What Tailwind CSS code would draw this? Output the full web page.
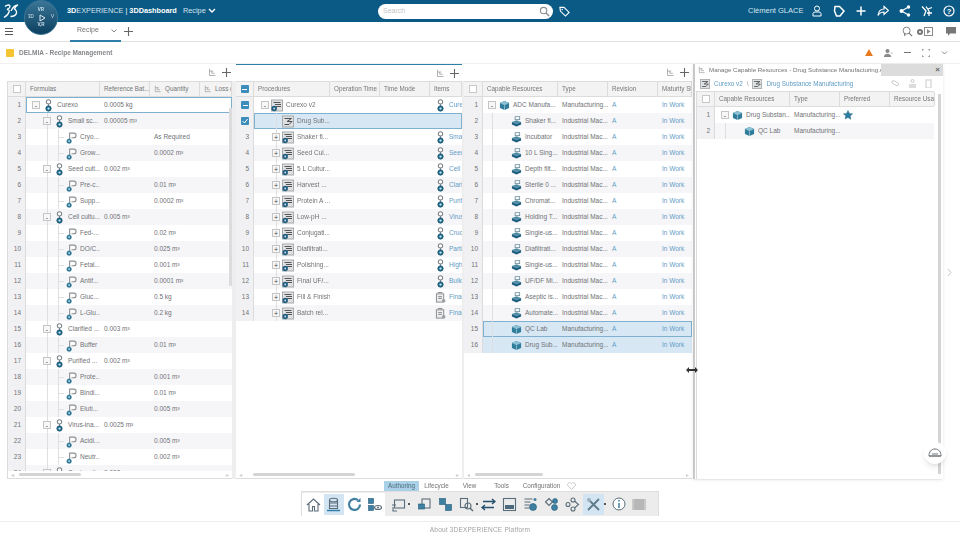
<!DOCTYPE html>
<html lang="en">
  <head>
    <meta charset="UTF-8" />
    <title>3DDashboard</title>
    <script src="https://cdn.jsdelivr.net/npm/@tailwindcss/browser@4"></script>
  </head>
  <body class="bg-white">
    <svg width="0" height="0" class="absolute">
      <defs>
        <symbol id="formula" viewBox="0 0 12 14">
          <circle cx="6" cy="3" r="2.4" fill="#fff" stroke="#7d8488" stroke-width="1.1" />
          <path d="M6 5.4V8" stroke="#7d8488" stroke-width="1.2" />
          <circle cx="6" cy="10.3" r="2.9" fill="#1f6e8f" stroke="#14506c" stroke-width=".8" />
          <circle cx="6" cy="10.3" r="1.2" fill="#cfe3ec" />
        </symbol>
        <symbol id="ingredient" viewBox="0 0 12 14">
          <path d="M4 9V2.2h4.5a2.4 2.4 0 0 1 0 5H6" fill="#fff" stroke="#8a9094" stroke-width="1.2" />
          <circle cx="3.4" cy="11" r="2.4" fill="#2b7f9c" stroke="#17607c" stroke-width=".6" />
          <circle cx="3.4" cy="11" r=".9" fill="#d6e8ef" />
        </symbol>
        <symbol id="proc" viewBox="0 0 12 12">
          <rect x=".5" y=".5" width="11" height="11" fill="#dfe0e1" stroke="#a7a9ab" />
          <path d="M2.5 3h7M4 5h6M5 7h5" stroke="#555" stroke-width="1" fill="none" />
          <circle cx="3.2" cy="9" r="2.7" fill="#1d5c83" />
          <circle cx="3.2" cy="9" r=".9" fill="#dfe0e1" />
        </symbol>
        <symbol id="procplain" viewBox="0 0 12 12">
          <rect x=".5" y=".5" width="11" height="11" fill="#dfe0e1" stroke="#a7a9ab" />
          <path d="M2.5 3h7L5 6h5L7 9H2.5" stroke="#4b4f52" stroke-width="1" fill="none" />
        </symbol>
        <symbol id="package" viewBox="0 0 12 14">
          <rect x="1.5" y="3" width="8" height="9" fill="#eee" stroke="#80868a" />
          <path d="M3 1.500h5M3.500 6h4M3.500 8h4" stroke="#80868a" fill="none" />
          <circle cx="9.500" cy="10.500" r="2" fill="#9ba1a5" />
        </symbol>
        <symbol id="cube" viewBox="0 0 12 12">
          <path d="M6 1l5 2.400v5.200L6 11 1 8.600V3.400z" fill="#2f7d9b" />
          <path d="M6 1l5 2.400L6 5.800 1 3.400z" fill="#8cc0d3" />
          <path d="M6 5.800V11" stroke="#b9d8e3" stroke-width=".7" />
        </symbol>
        <symbol id="machine" viewBox="0 0 12 12">
          <rect x="4.500" y=".8" width="5" height="3.200" fill="#fff" stroke="#5d7f90" stroke-width=".8" />
          <path d="M1 6.500l5-2 5 2-5 2.200z" fill="#4d8ba6" />
          <path d="M1 6.500v2.800L6 11.500l5-2.200V6.500L6 8.700z" fill="#1e5f80" />
        </symbol>
        <symbol id="star" viewBox="0 0 12 12">
          <path d="M6 .6l1.700 3.500 3.800.5-2.800 2.700.7 3.900L6 9l-3.400 1.700.7-3.900L.5 4.600l3.800-.5z" fill="#2d7ea3" stroke="#1d5c7d" stroke-width=".5" />
        </symbol>
        <symbol id="levels" viewBox="0 0 12 12">
          <path d="M2 1v9h8M2 4h5M5 4v3h4" stroke="#9a9a9a" fill="none" />
        </symbol>
      </defs>
    </svg>

    <div class="relative w-[960px] h-[540px] overflow-hidden flex flex-col blur-[0.3px] font-['Liberation_Sans',Arial,sans-serif] text-[#707275]">
      <!-- Top bar -->
      <header class="h-[22px] shrink-0 bg-[#0a5a85] flex items-center text-white">
        <span class="w-[67px]"></span>
        <span class="text-[7.300px] w-[115px] whitespace-nowrap"><b class="font-bold">3D</b><span class="text-[#d5e5ee]">EXPERIENCE</span> | <b class="font-bold">3DDashboard</b></span>
        <span class="text-[7.300px] text-[#d5e5ee] ml-[1px] w-[24px]">Recipe</span>
        <svg class="w-[8px] h-[6px] ml-[1px]" viewBox="0 0 8 6"><path d="M1 1l3 3 3-3" stroke="#fff" stroke-width="1.400" fill="none" /></svg>
        <div class="ml-[162px] w-[175px] h-[15px] bg-white rounded-full flex items-center justify-between pl-[5px] pr-[3px]">
          <span class="text-[7px] text-[#c4c6c8]">Search</span>
          <svg class="w-[11px] h-[11px]" viewBox="0 0 12 12"><circle cx="5" cy="5" r="3.500" fill="none" stroke="#8b8d8f" stroke-width="1.200" /><path d="M7.600 7.600L11 11" stroke="#8b8d8f" stroke-width="1.600" /></svg>
        </div>
        <svg class="w-[11px] h-[11px] ml-[6px]" viewBox="0 0 12 12"><path d="M1 1.500h4.500l5.500 5.500-4 4-5.500-5.500z" fill="none" stroke="#fff" stroke-width="1.200" /><circle cx="3.500" cy="3.800" r=".8" fill="#fff" /></svg>
        <span class="ml-[178px] w-[55px] text-[7.500px] text-[#d5e5ee] whitespace-nowrap">Clément GLACE</span>
        <div class="ml-[8px] flex gap-[10px]">
          <svg class="w-[12px] h-[12px]" viewBox="0 0 12 12"><circle cx="6" cy="3.500" r="2.500" fill="none" stroke="#fff" /><path d="M2 11V8.500a2 2 0 0 1 2-1.500h4a2 2 0 0 1 2 1.500V11z" fill="none" stroke="#fff" /></svg>
          <svg class="w-[12px] h-[12px]" viewBox="0 0 12 12"><path d="M2 1.500h4.500L11 6l-4 5H3.500L1.500 6z" fill="none" stroke="#fff" stroke-width="1.500" /></svg>
          <svg class="w-[12px] h-[12px]" viewBox="0 0 12 12"><path d="M6 1.500v9M1.500 6h9" stroke="#fff" stroke-width="1.500" /></svg>
          <svg class="w-[12px] h-[12px]" viewBox="0 0 12 12"><path d="M7 1.500L11.500 5.500 7 9.500V7C4 7 2.500 8 1 10.500 1.500 6.500 3.500 4 7 4z" fill="none" stroke="#fff" stroke-width="1.200" /></svg>
          <svg class="w-[12px] h-[12px]" viewBox="0 0 12 12"><path d="M2.500 6L9.500 2M2.500 6l7 4" stroke="#fff" stroke-width="1.200" /><circle cx="2.500" cy="6" r="2" fill="#fff" /><circle cx="9.500" cy="2" r="1.700" fill="#fff" /><circle cx="9.500" cy="10" r="1.700" fill="#fff" /></svg>
          <svg class="w-[12px] h-[12px]" viewBox="0 0 12 12"><path d="M1 1.500L5 6 3 11M5 1.500L8 6M11 2.500L7 4M6 8h5M8 6v5" stroke="#fff" stroke-width="1.300" fill="none" /></svg>
          <svg class="w-[12px] h-[12px]" viewBox="0 0 12 12"><circle cx="6" cy="6" r="5" fill="none" stroke="#fff" stroke-width="1.200" /><text x="6" y="8.800" text-anchor="middle" font-size="7.500" font-weight="bold" fill="#fff">?</text></svg>
        </div>
      </header>

      <!-- Tabs row -->
      <div class="h-[20px] shrink-0 border-b border-[#e2e2e2] flex items-center relative">
        <div class="w-[18px] flex flex-col gap-[2px] ml-[5px]">
          <span class="h-[1px] w-[8px] bg-[#555]"></span><span class="h-[1px] w-[8px] bg-[#555]"></span><span class="h-[1px] w-[8px] bg-[#555]"></span>
        </div>
        <div class="ml-[47px] w-[51px] h-[20px] border-b-2 border-[#2e7ea8] flex items-center pl-[7px] text-[7px]">
          Recipe
          <svg class="w-[6px] h-[4px] ml-[12px]" viewBox="0 0 6 4"><path d="M.5.500l2.500 2.500L5.500.500" stroke="#888" fill="none" /></svg>
        </div>
        <svg class="w-[9px] h-[9px] ml-[3px]" viewBox="0 0 9 9"><path d="M4.500 0v9M0 4.500h9" stroke="#666" stroke-width="1.100" /></svg>
        <div class="ml-auto mr-[4px] flex items-center">
          <svg class="w-[11px] h-[11px]" viewBox="0 0 12 12"><circle cx="5" cy="5" r="3.800" fill="none" stroke="#777" /><path d="M7.800 7.800L11 11M3 8v3" stroke="#777" stroke-width="1.300" /></svg>
          <span class="ml-[4px] w-[6px] h-[6px] rounded-full border-2 border-[#777]"></span>
          <svg class="w-[9px] h-[9px] ml-[1px] mr-[13px]" viewBox="0 0 9 9"><rect x=".5" y=".5" width="8" height="8" fill="none" stroke="#888" /><path d="M3 2l3.500 2.500L3 7z" fill="#888" /></svg>
          <svg class="w-[10px] h-[9px]" viewBox="0 0 10 9"><path d="M0 0h10v6.500H4L2 9V6.500H0z" fill="#777" /></svg>
        </div>
      </div>

      <!-- Widget title -->
      <div class="h-[22px] shrink-0 flex items-center pl-[6px] border-b border-[#f0f0f0]">
        <span class="w-[8px] h-[8px] bg-[#f5c431] rounded-[1px]"></span>
        <span class="ml-[5px] text-[6.500px] font-bold text-[#85878a]">DELMIA - Recipe Management</span>
        <div class="ml-auto flex items-center gap-[11px] pr-[12px]">
          <svg class="w-[8px] h-[7px]" viewBox="0 0 9 8"><path d="M4.500 0L9 8H0z" fill="#e8791f" /></svg>
          <svg class="w-[9px] h-[8px]" viewBox="0 0 9 8"><circle cx="3.500" cy="2" r="2" fill="#888" /><path d="M0 8c0-4 7-4 7 0zM6.500 4h2.500" fill="#888" stroke="#888" stroke-width=".5" /></svg>
          <span class="w-[7px] h-[1px] bg-[#777]"></span>
          <svg class="w-[8px] h-[8px]" viewBox="0 0 8 8"><path d="M0 2V0h2M6 0h2v2M8 6v2H6M2 8H0V6" fill="none" stroke="#777" /></svg>
          <svg class="w-[7px] h-[4px]" viewBox="0 0 6 4"><path d="M.5.500l2.500 2.500L5.500.500" stroke="#888" fill="none" /></svg>
        </div>
      </div>

      <!-- Three docked grids -->
      <main id="panels" class="h-[415px] shrink-0 flex pl-[7px]"></main>

      <!-- Action bar -->
      <div class="flex flex-col items-center h-[35px] mt-[2px] shrink-0">
        <div class="h-[10px] flex items-center text-[6.300px] w-[358px] pl-[83px]">
          <span class="w-[35px] h-[10px] leading-[10px] bg-[#a9d1e7] text-center text-[#4f6a7a]">Authoring</span>
          <span class="w-[35px] text-center">Lifecycle</span>
          <span class="w-[31px] text-center">View</span>
          <span class="w-[33px] text-center">Tools</span>
          <span class="w-[47px] text-center">Configuration</span>
          <svg class="w-[9px] h-[8px] ml-[2px]" viewBox="0 0 9 8"><path d="M4.500 7.500L.8 3.500A2 2 0 0 1 4.500 1.800 2 2 0 0 1 8.200 3.500z" fill="none" stroke="#c9c9c9" /></svg>
        </div>
        <div id="toolbar" class="w-[358px] h-[25px] bg-[#ececec] flex items-end border-t border-x border-[#dedede]"></div>
      </div>

      <div class="h-[6px] shrink-0 border-b border-[#ededed]"></div>
      <div class="text-center text-[6.500px] text-[#a0a2a5] mt-[3px] tracking-[.2px]">About 3DEXPERIENCE Platform</div>

      <!-- Compass over the top bar -->
      <div class="absolute left-[24px] top-[0px] w-[34px] h-[35px] rounded-full bg-linear-to-b from-[#3a7697] to-[#0c4060] border border-[#3c7594] flex flex-col items-center justify-center text-[4.500px] text-[#cfe2ec]">
        <span class="font-bold">VR</span>
        <span class="flex items-center gap-[5px]">3D
          <svg class="w-[7px] h-[8px]" viewBox="0 0 7 8"><path d="M1 1l5 3-5 3z" fill="none" stroke="#dfeaf0" /></svg>
          V</span>
        <span class="font-bold">V,R</span>
      </div>
      <!-- DS logo -->
      <svg class="absolute left-[3px] top-[3px] w-[16px] h-[16px]" viewBox="0 0 16 16">
        <path d="M2 3.500c2.500-2 5-2 5 0 0 1.500-2 2.500-3 3 2 0 2.500 1 2 2.500-.5 2-2.500 4-5 5.500" fill="none" stroke="#fff" stroke-width="1.300" />
        <path d="M8 8c2-4 5-6 7-6-2 1-3 2.500-3.500 4 1.500 1 2.500 2 2 4-.5 2-3 3.500-6 3.500" fill="none" stroke="#fff" stroke-width="1.300" />
      </svg>

      <!-- Manage Capable Resources window -->
      <section id="floating" class="absolute left-[693px] top-[64px] w-[250px] h-[415px] bg-white border-l-2 border-[#c8c8c8] shadow-sm"></section>

      <!-- Side handle, assistant button and resize cursor -->
      <div class="absolute left-[945px] top-[264px] w-[9px] h-[16px] flex items-center justify-center">
        <svg class="w-[5px] h-[9px]" viewBox="0 0 5 9"><path d="M1 1l3 3.500L1 8" fill="none" stroke="#c4c4c4" /></svg>
      </div>
      <div class="absolute left-[924px] top-[442px] w-[22px] h-[22px] rounded-full bg-white shadow-md flex items-center justify-center">
        <svg class="w-[14px] h-[10px]" viewBox="0 0 14 10"><path d="M1 8c0-4 2-7 6-7s6 3 6 7zM4 6h6M1 8h12" fill="none" stroke="#6d7478" /></svg>
      </div>
      <svg class="absolute left-[686px] top-[367px] w-[12px] h-[6px]" viewBox="0 0 12 6"><path d="M0 3l3-3v2h6V0l3 3-3 3V4H3v2z" fill="#333" /></svg>
    </div>

    <script>
      const use = (id, cls) => `<svg class="${cls}"><use href="#${id}" /></svg>`;
      const exp = (sign) => `<span class="relative z-10 w-[8px] h-[8px] shrink-0 bg-[#f7f7f7] border border-[#c5c5c5] flex items-center justify-center text-[7px] leading-none text-[#444]">${sign}</span>`;
      const gl = "absolute top-0 bottom-0 w-px bg-[#dfdfdf]";
      const checkbox = (on) => on === "tick"
        ? `<span class="w-[8px] h-[8px] bg-[#3c8dbc] rounded-[1px] flex items-center justify-center"><svg class="w-[6px] h-[6px]" viewBox="0 0 6 6"><path d="M.5 3l2 2L5.500 1" stroke="#fff" fill="none" /></svg></span>`
        : on === "dash"
        ? `<span class="w-[8px] h-[8px] bg-[#3c8dbc] rounded-[1px] flex items-center justify-center"><span class="w-[5px] h-px bg-white"></span></span>`
        : `<span class="w-[8px] h-[8px] bg-white border border-[#c8c8c8]"></span>`;

      // one grid header + rows
      function grid(cfg) {
        const head = cfg.cols.map((c) =>
          `<div class="${c.w} shrink-0 h-full border-r border-[#dcdcdc] pl-[4px] flex items-center gap-[3px] overflow-hidden whitespace-nowrap">${c.lv ? use("levels", "w-[8px] h-[8px] shrink-0") : ""}${c.t}</div>`
        ).join("");
        const rows = cfg.rows.map((r, i) => {
          const n = i + 1;
          const sel = r.sel;
          let bg = n % 2 ? "bg-white" : "bg-[#f6f6f9]";
          if (sel) bg = "bg-[#d7e8f4]";
          const ring = r.focus ? "outline outline-1 -outline-offset-1 outline-[#7fb0d0]" : "";
          const tree = `<div class="${cfg.cols[0].w} shrink-0 h-full relative flex items-center ${r.pl} overflow-hidden">
              ${(r.lines || []).map((l) => `<span class="${gl} ${l}"></span>`).join("")}
              ${r.stub ? `<span class="absolute top-1/2 h-px w-[6px] bg-[#dfdfdf] ${r.stub}"></span>` : ""}
              ${r.e ? exp(r.e) : ""}
              <span class="relative z-10 ${r.e ? "ml-[2px]" : ""} w-[12px] h-[14px] shrink-0 flex items-center justify-center">${use(r.i, r.big ? "w-[12px] h-[13px]" : "w-[11px] h-[13px]")}</span>
              <span class="ml-[3px] whitespace-nowrap">${r.t}</span>
            </div>`;
          const cells = cfg.cols.slice(1).map((c, k) => {
            const v = (r.c || [])[k];
            const blue = cfg.blue && cfg.blue.includes(k);
            return `<div class="${c.w} shrink-0 h-full pl-[4px] flex items-center gap-[3px] whitespace-nowrap overflow-hidden ${blue ? "text-[#5f9cc5]" : ""}">${v || ""}</div>`;
          }).join("");
          return `<div class="flex h-[16px] shrink-0">
              <div class="${cfg.numW} shrink-0 h-full bg-[#f1f1f3] border-r border-[#dcdcdc] flex items-center justify-end pr-[4px] text-[6.500px]">${r.check ? checkbox(r.check) : n}</div>
              <div class="flex flex-1 min-w-0 h-full ${bg} ${ring}">${tree}${cells}</div>
            </div>`;
        }).join("");
        return `<div class="h-[16px] shrink-0 flex bg-[#f3f3f3] border-y border-[#dcdcdc] text-[#75777a]">
            <div class="${cfg.numW} shrink-0 h-full border-r border-[#dcdcdc] flex items-center justify-center">${checkbox(cfg.headCheck)}</div>${head}
          </div>
          <div class="flex-1 min-h-0 overflow-hidden flex flex-col text-[6.500px]">${rows}</div>`;
      }

      const hscroll = (thumb) => `<div class="h-[7px] shrink-0 flex items-center px-[3px] gap-[3px] bg-white">
          <span class="text-[#cfcfcf] text-[6px] leading-none">◂</span>
          <span class="flex-1 h-[3px] relative"><span class="absolute top-0 bottom-0 bg-[#d4d4d4] rounded-full ${thumb}"></span></span>
          <span class="text-[#cfcfcf] text-[6px] leading-none">▸</span>
        </div>`;
      const tools = (cls) => `<div class="h-[17px] flex items-center justify-end gap-[5px] ${cls}">${use("levels", "w-[9px] h-[9px]")}<svg class="w-[9px] h-[9px]" viewBox="0 0 9 9"><path d="M4.500 0v9M0 4.500h9" stroke="#666" stroke-width="1.100" /></svg></div>`;

      // left grid
      const L = { pl0: "pl-[6px]", pl1: "pl-[17px]", pl2: "pl-[39px]", v: "left-[21px]", s: "left-[32px]" };
      const f1 = (t, ref) => ({ t, e: "-", i: "formula", pl: L.pl1, lines: [L.v], c: [ref] });
      const f2 = (t, q) => ({ t, i: "ingredient", pl: L.pl2, lines: [L.v, L.s], stub: L.s, c: ["", q] });
      const formulas = [
        { t: "Curexo", e: "-", i: "formula", pl: L.pl0, c: ["0.0005 kg"], focus: true },
        f1("Small sc...", "0.00005 m³"), f2("Cryo...", "As Required"), f2("Grow...", "0.0002 m³"),
        f1("Seed cult...", "0.002 m³"), f2("Pre-c...", "0.01 m³"), f2("Supp...", "0.0002 m³"),
        f1("Cell cultu...", "0.005 m³"), f2("Fed-...", "0.02 m³"), f2("DO/C...", "0.025 m³"),
        f2("Fetal...", "0.001 m³"), f2("Antif...", "0.0001 m³"), f2("Gluc...", "0.5 kg"), f2("L-Glu...", "0.2 kg"),
        f1("Clarified ...", "0.003 m³"), f2("Buffer", "0.01 m³"),
        f1("Purified ...", "0.002 m³"), f2("Prote...", "0.001 m³"), f2("Bindi...", "0.01 m³"), f2("Eluti...", "0.005 m³"),
        f1("Virus-ina...", "0.0025 m³"), f2("Acidi...", "0.005 m³"), f2("Neutr...", "0.002 m³"),
        f1("Conjugati...", "0.002 m³"),
      ];

      // middle grid
      const p1 = (t, item, pk) => ({
        t, e: "+", i: "proc", big: true, pl: "pl-[18px]", lines: ["left-[22px]"],
        c: ["", "", `${use(pk ? "package" : "formula", "w-[11px] h-[13px] shrink-0 ml-[1px]")}<span>${item}</span>`],
      });
      const procedures = [
        { t: "Curexo v2", e: "-", i: "proc", big: true, pl: "pl-[7px]", check: "dash", c: ["", "", `${use("formula", "w-[11px] h-[13px] shrink-0 ml-[1px]")}<span>Cure</span>`] },
        { t: "Drug Sub...", i: "procplain", big: true, pl: "pl-[28px]", lines: ["left-[22px]"], check: "tick", sel: true, focus: true },
        p1("Shaker fl...", "Small"), p1("Seed Cul...", "Seed"), p1("5 L Cultur...", "Cell c"), p1("Harvest ...", "Clarif"),
        p1("Protein A ...", "Purifi"), p1("Low-pH ...", "Virus"), p1("Conjugati...", "Crud"), p1("Diafiltrati...", "Partia"),
        p1("Polishing...", "Highl"), p1("Final UF/...", "Bulk"), p1("Fill &amp; Finish", "Final", true), p1("Batch rel...", "Final", true),
      ];

      // right grid
      const r1 = (t, type, i, extra) => ({ t, i, pl: "pl-[27px]", lines: ["left-[9px]"], c: [type, "A", "In Work"], ...extra });
      const IM = "Industrial Mac...", MF = "Manufacturing...";
      const resources = [
        { t: "ADC Manufa...", e: "-", i: "cube", pl: "pl-[5px]", c: [MF, "A", "In Work"] },
        ...["Shaker fl...", "Incubator", "10 L Sing...", "Depth filt...", "Sterile 0 ...", "Chromat...", "Holding T...", "Single-us...", "Diafiltrati...", "Single-us...", "UF/DF Mi...", "Aseptic is...", "Automate..."].map((t) => r1(t, IM, "machine")),
        r1("QC Lab", MF, "cube", { sel: true, focus: true }),
        r1("Drug Sub...", MF, "cube", { sel: true }),
      ];

      document.getElementById("panels").innerHTML = `
        <div class="w-[225px] shrink-0 flex flex-col text-[6.300px]">
          ${tools("pr-[1px]")}
          <div class="flex-1 min-h-0 relative border-l border-b border-[#dcdcdc] flex flex-col">
            ${grid({ numW: "w-[18px]", cols: [{ w: "w-[74px]", t: "Formulas" }, { w: "w-[50px]", t: "Reference Bat..." }, { w: "w-[50px]", t: "Quantity", lv: true }, { w: "w-[32px]", t: "Loss q", lv: true }], rows: formulas })}
            <span class="absolute right-0 top-[27px] w-[3px] h-[178px] bg-[#dcdcdc]"></span>
            ${hscroll("left-[2px] w-[62px]")}
          </div>
        </div>
        <div class="w-[4px] shrink-0 bg-[#eeeeee] mt-[17px]"></div>
        <div class="w-[226px] shrink-0 flex flex-col text-[6.300px]">
          <div class="border-t border-[#2e7ea8]">${tools("pr-[3px]")}</div>
          <div class="flex-1 min-h-0 border-b border-[#dcdcdc] flex flex-col -mt-px">
            ${grid({ numW: "w-[18px]", headCheck: "dash", blue: [2], cols: [{ w: "w-[76px]", t: "Procedures" }, { w: "w-[50px]", t: "Operation Time" }, { w: "w-[50px]", t: "Time Mode" }, { w: "w-[32px]", t: "Items" }], rows: procedures })}
            ${hscroll("left-[8px] w-[102px]")}
          </div>
        </div>
        <div class="w-[2px] shrink-0 bg-[#eeeeee] mt-[17px]"></div>
        <div class="w-[228px] shrink-0 flex flex-col text-[6.300px]">
          ${tools("pr-[3px]")}
          <div class="flex-1 min-h-0 border-b border-[#dcdcdc] flex flex-col">
            ${grid({ numW: "w-[19px]", blue: [1, 2], cols: [{ w: "w-[75px]", t: "Capable Resources" }, { w: "w-[50px]", t: "Type" }, { w: "w-[50px]", t: "Revision" }, { w: "w-[34px]", t: "Maturity St" }], rows: resources })}
            ${hscroll("left-[2px] w-[68px]")}
          </div>
        </div>`;

      document.getElementById("floating").innerHTML = `
        <div class="h-[12px] flex text-[6.200px]">
          <div class="w-[186px] pl-[3px] flex items-center gap-[3px] whitespace-nowrap overflow-hidden">${use("levels", "w-[8px] h-[8px] shrink-0")}Manage Capable Resources - Drug Substance Manufacturing A</div>
          <div class="flex-1 bg-[#dcdcdc] flex items-center justify-end pr-[3px] text-[8px] font-bold text-[#666]">×</div>
        </div>
        <div class="h-[15px] flex items-center pl-[5px] text-[6.300px] text-[#5f9cc5] gap-[3px]">
          ${use("procplain", "w-[10px] h-[10px]")}<span class="ml-[1px]">Curexo v2</span><span class="text-[#999] mx-[1px]">\\</span>${use("procplain", "w-[10px] h-[10px]")}<span class="ml-[1px]">Drug Substance Manufacturing</span>
          <div class="ml-auto flex items-center gap-[8px] pr-[11px] text-[#c9c9c9]">
            <svg class="w-[9px] h-[7px]" viewBox="0 0 9 7"><path d="M1 1h3l4 3-2 2-5-3z" fill="none" stroke="#c9c9c9" /></svg>
            <svg class="w-[9px] h-[10px]" viewBox="0 0 9 10"><circle cx="4.500" cy="2" r="1.500" fill="none" stroke="#c9c9c9" /><path d="M1 9V5h7v4z" fill="#dddddd" /></svg>
            <svg class="w-[7px] h-[9px]" viewBox="0 0 7 9"><path d="M0 1h7M1 2v7h5V2" fill="none" stroke="#c9c9c9" /></svg>
          </div>
        </div>
        <div class="relative ml-[1px] mr-[9px] h-[388px] flex flex-col text-[6.300px] border-l border-[#dcdcdc]">
          ${grid({ numW: "w-[18px]", cols: [{ w: "w-[75px]", t: "Capable Resources" }, { w: "w-[50px]", t: "Type" }, { w: "w-[50px]", t: "Preferred" }, { w: "w-[45px]", t: "Resource Usag" }], rows: [
            { t: "Drug Substan...", e: "-", i: "cube", pl: "pl-[6px]", c: [MF, `<span class="ml-[-1px]">${use("star", "w-[10px] h-[10px]")}</span>`] },
            { t: "QC Lab", i: "cube", pl: "pl-[28px]", lines: ["left-[10px]"], c: [MF] },
          ] })}
        </div>
        <span class="absolute right-[2px] top-[30px] w-[3px] h-[380px] bg-[#d4d4d4]"></span>`;

      // bottom action bar icons
      const ic = (body, sel) => `<span class="w-[21px] h-[21px] flex items-center justify-center ${sel ? "bg-[#d3e5f3]" : ""}"><svg class="w-[15px] h-[15px]" viewBox="0 0 15 15">${body}</svg></span>`;
      const dark = 'fill="none" stroke="#5b6d78" stroke-width="1.100"';
      const teal = 'fill="#3f7f9f" stroke="#235d7c" stroke-width=".6"';
      const left = [
        ic(`<path d="M1 8l6.500-6L14 8M3 7v7h3.500V9.500h2V14H12V7" ${dark} />`),
        ic(`<ellipse cx="7.500" cy="3" rx="4" ry="1.800" ${dark} /><path d="M3.500 3v8.500h8V3M3.500 6h8M3.500 9h8" ${dark} /><path d="M1 13.500h13" stroke="#2e7ea8" stroke-width="1.500" />`, true),
        ic(`<path d="M13 7.500a5.500 5.500 0 1 1-2-4.300" fill="none" stroke="#3f7f9f" stroke-width="2.200" /><path d="M13.500 1v4h-4z" fill="#3f7f9f" />`),
        ic(`<rect x="1.500" y="1.500" width="5" height="5" ${teal} /><rect x="1.500" y="8.500" width="5" height="5" ${teal} /><ellipse cx="11" cy="10.500" rx="3.500" ry="2" ${dark} /><circle cx="11" cy="10.500" r="1" fill="#5b6d78" />`),
      ].join("");
      const right = [
        ic(`<rect x="3.500" y="3" width="10" height="8" ${dark} /><path d="M1 8h4M2 10v4h4" ${dark} />`),
        ic(`<rect x="5" y="2" width="8" height="9" ${dark} /><rect x="1.500" y="7" width="6" height="5" ${teal} />`),
        ic(`<rect x="1.500" y="1.500" width="6" height="6" ${teal} /><rect x="7.500" y="7.500" width="6" height="6" ${teal} />`),
        ic(`<rect x="1.500" y="1.500" width="7" height="9" ${dark} /><circle cx="9" cy="9" r="3" ${dark} /><path d="M11 11l3 3" stroke="#5b6d78" stroke-width="1.500" />`),
        ic(`<path d="M2 4.500h11M11 2l3 2.500L11 7M13 10.500H2M4 8l-3 2.500L4 13" fill="none" stroke="#234f6b" stroke-width="1.400" />`),
        ic(`<rect x="1.500" y="1.500" width="12" height="12" ${dark} /><rect x="3" y="8" width="9" height="4" fill="#4b6a7d" />`),
        ic(`<path d="M1.500 2h8M1.500 5h6M1.500 8h5M1.500 11h5" ${dark} /><circle cx="12" cy="2.500" r="1.500" fill="#3f7f9f" /><circle cx="10" cy="10" r="3.500" ${teal} />`),
        ic(`<path d="M5 1.500l3.500 3.500L5 8.500 1.500 5z" ${dark} /><circle cx="11" cy="4" r="2.500" ${teal} /><circle cx="10.500" cy="10.500" r="3" ${teal} />`),
        ic(`<circle cx="3" cy="7.500" r="2" ${dark} /><circle cx="8" cy="3" r="2" ${dark} /><circle cx="8" cy="12" r="2" ${dark} /><path d="M9.500 4l4 3.500-4 3.500" ${dark} />`),
        ic(`<path d="M2 2l11 11M13 2L2 13" stroke="#5f7a8b" stroke-width="1.800" /><circle cx="3" cy="3" r="2" fill="#9fb1bc" />`, true),
      ];
      document.getElementById("toolbar").innerHTML = `
        <div class="w-[83px] h-[23px] bg-white flex items-center pl-[1px]">${left}</div>
        <div class="flex-1 h-[24px] flex items-center pl-[3px]">
          ${right[0]}<span class="w-[2px] h-[2px] bg-[#555] -ml-[1px] mr-[4px]"></span>${right[1]}${right[2]}${right[3]}<span class="w-[2px] h-[2px] bg-[#555] -ml-[1px]"></span>${right.slice(4, 9).join("")}${right[9]}<span class="w-[2px] h-[2px] bg-[#555] mr-[2px]"></span>
          <span class="w-[21px] h-[21px] flex items-center justify-center"><svg class="w-[14px] h-[14px]" viewBox="0 0 14 14"><circle cx="7" cy="7" r="6" fill="#fff" stroke="#5b6d78" /><path d="M7 3v1.500M7 6v5" stroke="#3f7f9f" stroke-width="1.500" /></svg></span>
          <span class="w-[14px] h-[11px] ml-[3px] bg-[#b7b7b7] border-x-2 border-[#c9c9c9]"></span>
        </div>`;
    </script>
  </body>
</html>
